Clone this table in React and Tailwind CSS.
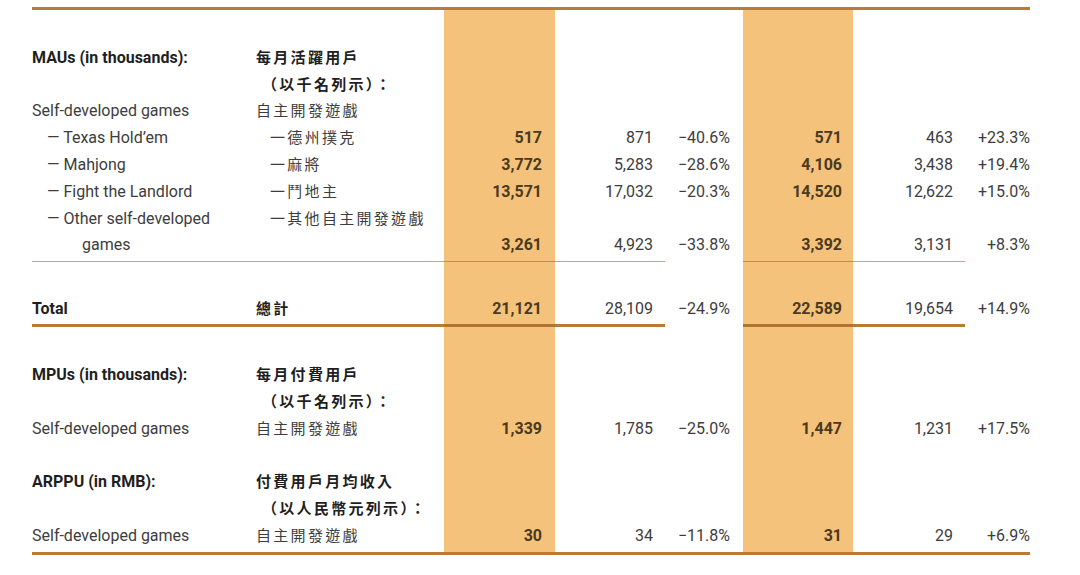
const G = 'grid grid-cols-[224px_188px_111px_110px_78px_110px_112px_65px]';
const ORANGE = 'bg-[#f5c27b]';
const EN = { fontFamily: 'Roboto, "Noto Sans", sans-serif' };
const ZH = { fontFamily: '"Noto Sans CJK TC", "Noto Sans CJK SC", sans-serif' };

const rows = [
  { gap: 'h-[34px]' },
  { en: 'MAUs (in thousands):', zh: '每月活躍用戶', head: true },
  { zh: '（以千名列示）：', head: true, zhPad: 'pl-[6px]' },
  { en: 'Self-developed games', zh: '自主開發遊戲' },
  { en: '— Texas Hold’em', zh: '一德州撲克', enPad: 'pl-[15px]', zhPad: 'pl-[14px]', v: ['517', '871', '−40.6%', '571', '463', '+23.3%'] },
  { en: '— Mahjong', zh: '一麻將', enPad: 'pl-[15px]', zhPad: 'pl-[14px]', v: ['3,772', '5,283', '−28.6%', '4,106', '3,438', '+19.4%'] },
  { en: '— Fight the Landlord', zh: '一鬥地主', enPad: 'pl-[15px]', zhPad: 'pl-[14px]', v: ['13,571', '17,032', '−20.3%', '14,520', '12,622', '+15.0%'] },
  { en: '— Other self-developed', zh: '一其他自主開發遊戲', enPad: 'pl-[15px]', zhPad: 'pl-[14px]' },
  { en: 'games', enPad: 'pl-[50px]', v: ['3,261', '4,923', '−33.8%', '3,392', '3,131', '+8.3%'] },
  { gap: 'h-[3px]' },
  { line: 'thin' },
  { gap: 'h-[33px]' },
  { en: 'Total', zh: '總計', head: true, v: ['21,121', '28,109', '−24.9%', '22,589', '19,654', '+14.9%'] },
  { gap: 'h-[2px]' },
  { line: 'thick' },
  { gap: 'h-[34px]' },
  { en: 'MPUs (in thousands):', zh: '每月付費用戶', head: true },
  { zh: '（以千名列示）：', head: true, zhPad: 'pl-[6px]' },
  { en: 'Self-developed games', zh: '自主開發遊戲', v: ['1,339', '1,785', '−25.0%', '1,447', '1,231', '+17.5%'] },
  { gap: 'h-[26.8px]' },
  { en: 'ARPPU (in RMB):', zh: '付費用戶月均收入', head: true },
  { zh: '（以人民幣元列示）：', head: true, zhPad: 'pl-[6px]' },
  { en: 'Self-developed games', zh: '自主開發遊戲', v: ['30', '34', '−11.8%', '31', '29', '+6.9%'] },
  { gap: 'h-[3px]' },
];

function Gap({ h }) {
  return (
    <div className={`${G} ${h}`}>
      <div />
      <div />
      <div className={ORANGE} />
      <div />
      <div />
      <div className={ORANGE} />
      <div />
      <div />
    </div>
  );
}

function Line({ kind }) {
  const h = kind === 'thin' ? 'h-px' : 'h-[3px]';
  const c = kind === 'thin' ? 'bg-[#dba45a]' : 'bg-[#b87a34]';
  const co = kind === 'thin' ? 'bg-[#c98b3e]' : 'bg-[#b07330]';
  return (
    <div className={`${G} ${h}`}>
      <div className={c} />
      <div className={c} />
      <div className={co} />
      <div className={c} />
      <div />
      <div className={co} />
      <div className={c} />
      <div />
    </div>
  );
}

function Row({ r }) {
  const v = r.v || [];
  const num = 'flex items-center justify-end pt-[1px] text-[16px] text-[#3d3d3d]';
  const bold = 'flex items-center justify-end pt-[1px] text-[16px] font-bold text-[#4a3a20]';
  return (
    <div className={`${G} h-[26.8px]`}>
      <div
        style={EN}
        className={`flex items-center whitespace-nowrap pt-[1px] text-[16px] ${r.enPad || ''} ${r.head ? 'font-bold text-[#1f1f1f]' : 'text-[#3d3d3d]'}`}
      >
        {r.en}
      </div>
      <div
        style={ZH}
        className={`flex items-center whitespace-nowrap pb-[2px] text-[15px] leading-none tracking-[2.3px] ${r.zhPad || ''} ${r.head ? 'font-bold text-[#1f1f1f]' : 'text-[#3d3d3d]'}`}
      >
        {r.zh}
      </div>
      <div style={EN} className={`${ORANGE} ${bold} pr-[13px]`}>{v[0]}</div>
      <div style={EN} className={`${num} pr-[12px]`}>{v[1]}</div>
      <div style={EN} className={`${num} pr-[13px]`}>{v[2]}</div>
      <div style={EN} className={`${ORANGE} ${bold} pr-[11px]`}>{v[3]}</div>
      <div style={EN} className={`${num} pr-[12px]`}>{v[4]}</div>
      <div style={EN} className={num}>{v[5]}</div>
    </div>
  );
}

export default function App() {
  return (
    <div className="w-[1080px] h-[575px] bg-white pl-[32px] pt-[7px] overflow-hidden">
      <div className="w-[998px] h-[3px] bg-[#b87a34]" />
      {rows.map((r, i) =>
        r.gap ? <Gap key={i} h={r.gap} /> : r.line ? <Line key={i} kind={r.line} /> : <Row key={i} r={r} />
      )}
      <div className="w-[998px] h-[3px] bg-[#b87a34]" />
    </div>
  );
}
